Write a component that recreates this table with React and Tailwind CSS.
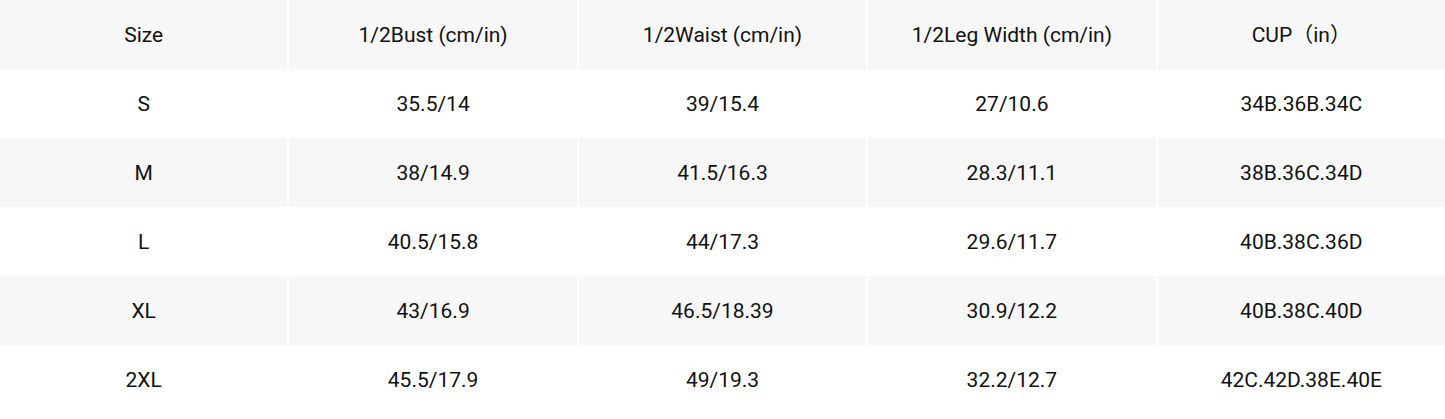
const headers = ['Size', '1/2Bust (cm/in)', '1/2Waist (cm/in)', '1/2Leg Width (cm/in)', 'CUP\uFF08in\uFF09'];

const rows = [
  ['S', '35.5/14', '39/15.4', '27/10.6', '34B.36B.34C'],
  ['M', '38/14.9', '41.5/16.3', '28.3/11.1', '38B.36C.34D'],
  ['L', '40.5/15.8', '44/17.3', '29.6/11.7', '40B.38C.36D'],
  ['XL', '43/16.9', '46.5/18.39', '30.9/12.2', '40B.38C.40D'],
  ['2XL', '45.5/17.9', '49/19.3', '32.2/12.7', '42C.42D.38E.40E'],
];

function Row({ cells, shaded }) {
  return (
    <div className="grid grid-cols-5 gap-x-[2px] h-[69px]">
      {cells.map((c, i) => (
        <div
          key={i}
          className={`flex items-center justify-center pt-[2px] ${shaded ? 'bg-[#f7f7f7]' : 'bg-white'}`}
        >
          {c}
        </div>
      ))}
    </div>
  );
}

export default function App() {
  return (
    <div
      className="w-[1445px] h-[419px] bg-white text-[21px] text-[#111111]"
      style={{ fontFamily: 'Roboto, "Noto Sans CJK SC", sans-serif' }}
    >
      <Row cells={headers} shaded />
      {rows.map((r, i) => (
        <Row key={r[0]} cells={r} shaded={i % 2 === 1} />
      ))}
    </div>
  );
}
